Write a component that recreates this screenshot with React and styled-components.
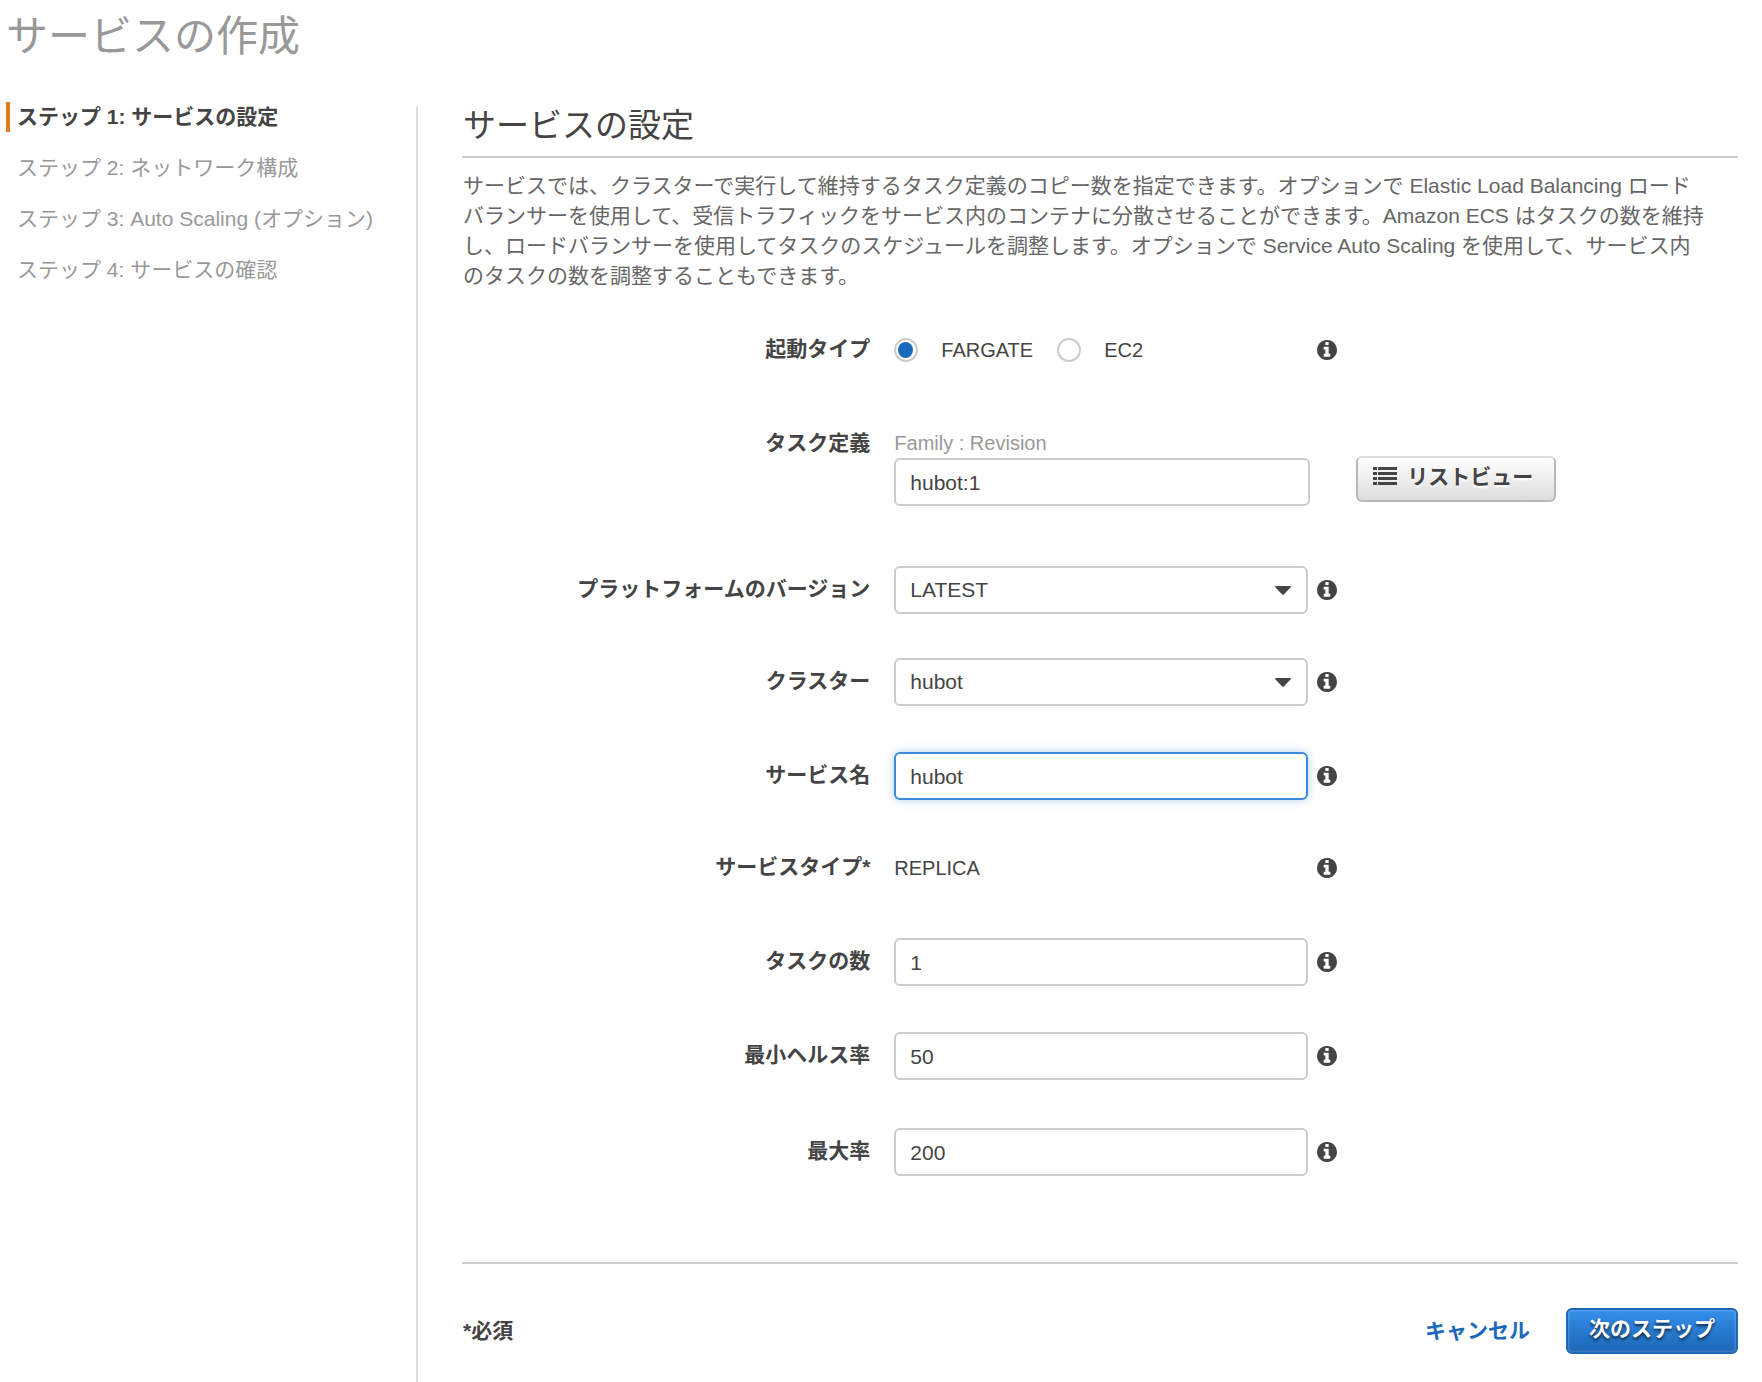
import React, { useState } from 'react';
import styled, { createGlobalStyle, css } from 'styled-components';

const GlobalStyle = createGlobalStyle`
    * {
        box-sizing: border-box;
    }

    body {
        margin: 0;
        background: #fff;
        color: #444;
        font-family: 'Liberation Sans', 'Noto Sans CJK JP', sans-serif;
        font-size: 21px;
        line-height: 30px;
    }

    button, input, select {
        font: inherit;
        color: inherit;
    }
`;

const Page = styled.div`
    display: flex;
    flex-direction: column;
    min-height: 100vh;
`;

const PageTitle = styled.h1`
    margin: 0;
    padding: 7px 6px 33px;
    color: #999;
    font-size: 42px;
    font-weight: 400;
    line-height: 60px;
`;

const Layout = styled.div`
    flex: 1;
    display: flex;
    padding: 0 24px 0 6px;
`;

const Sidebar = styled.nav`
    flex: 0 0 410px;
`;

const StepList = styled.ol`
    display: flex;
    flex-direction: column;
    gap: 21px;
    margin: 0;
    padding: 2px 0 0;
    list-style: none;
`;

const Step = styled.li`
    padding-left: 7px;
    border-left: 4px solid transparent;
    color: #999;

    ${({ $active }) =>
        $active &&
        css`
            border-color: #e07b23;
            color: #444;
            font-weight: 700;
        `}
`;

const Main = styled.main`
    flex: 1;
    min-width: 0;
    margin-top: 6px;
    padding-left: 44px;
    border-left: 2px solid #ddd;
`;

const SectionTitle = styled.h2`
    margin: 0;
    padding: 0 1px 10px;
    border-bottom: 2px solid #ccc;
    font-size: 33px;
    font-weight: 400;
    line-height: 40px;
`;

const Description = styled.p`
    margin: 13px 0 35px;
    padding: 0 30px 0 1px;
    color: #666;
`;

const Row = styled.div`
    display: grid;
    grid-template-columns: 32% 1fr;
    column-gap: 24px;
    align-items: ${({ $top }) => ($top ? 'start' : 'center')};
    margin-bottom: ${({ $gap }) => $gap || 44}px;
`;

const Label = styled.label`
    padding-bottom: 2px;
    font-weight: 700;
    text-align: right;
    line-height: 22px;
`;

const Controls = styled.div`
    display: flex;
    align-items: center;
    gap: 9px;
    min-height: 48px;
`;

const Field = styled.div`
    position: relative;
    display: flex;
    align-items: center;
    flex: 0 1 414px;
    font-size: 20px;
`;

const controlStyle = css`
    width: 100%;
    height: 48px;
    padding: 0 14px;
    border: 2px solid #ccc;
    border-radius: 6px;
    background: #fff;
    font-size: 21px;
    outline: none;
`;

const TextInput = styled.input`
    ${controlStyle}
    padding-top: 2px;

    ${({ $focused }) =>
        $focused &&
        css`
            border-color: #3b8ade;
            box-shadow: 0 0 10px #3b8ade66;
        `}
`;

const Select = styled.select`
    ${controlStyle}
    appearance: none;
`;

const Caret = styled.svg`
    position: absolute;
    right: 17px;
    width: 16px;
    height: 9px;
    fill: #444;
    pointer-events: none;
`;

const RadioLabel = styled.label`
    display: flex;
    align-items: center;
    gap: 23px;
    margin-right: 24px;
`;

const Radio = styled.input`
    appearance: none;
    width: 24px;
    height: 24px;
    margin: 0;
    border: 2px solid #ccc;
    border-radius: 50%;

    &:checked::before {
        content: '';
        display: block;
        width: 15px;
        height: 16px;
        margin: 2px;
        border-radius: 50%;
        background: #1a69bb;
    }
`;

const InfoButton = styled.button`
    display: flex;
    padding: 0;
    border: 0;
    background: none;
`;

const InfoIcon = styled.svg`
    width: 20px;
    height: 20px;
    fill: #444;
`;

const TaskControls = styled.div`
    display: flex;
    align-items: flex-end;
    gap: 46px;
`;

const TaskField = styled.div`
    flex: 0 1 416px;
`;

const Hint = styled.div`
    padding-bottom: 4px;
    color: #999;
    font-size: 20px;
    line-height: 22px;
`;

const Button = styled.button`
    display: flex;
    align-items: center;
    justify-content: center;
    height: 46px;
    border-radius: 6px;
    font-weight: 700;
    white-space: nowrap;
`;

const ListButton = styled(Button)`
    gap: 10px;
    width: 200px;
    margin-bottom: 4px;
    padding: 0 6px 4px 0;
    border: 2px solid #b8b8b8;
    border-top-color: #ddd;
    background: linear-gradient(#fff, #dcdcdc);
    text-shadow: 0 2px 2px #fff;
`;

const ListIcon = styled.svg`
    width: 24px;
    height: 18px;
    margin-bottom: 2px;
    fill: #444;
`;

const Footer = styled.footer`
    display: flex;
    align-items: center;
    gap: 36px;
    margin-top: 86px;
    padding: 44px 0 28px;
    border-top: 2px solid #ccc;
    font-weight: 700;
`;

const Required = styled.span`
    margin-right: auto;
    padding-left: 1px;
`;

const CancelLink = styled.a`
    color: #1a69bb;
    text-decoration: none;
`;

const NextButton = styled(Button)`
    width: 172px;
    padding: 0 0 4px;
    border: 2px solid #1c68b9;
    background: linear-gradient(#368fea, #1a66b6);
    box-shadow: inset 0 0 3px #ffffff66;
    color: #fff;
    text-shadow: 0 2px 3px #000000b3;
`;

const steps = [
    'ステップ 1: サービスの設定',
    'ステップ 2: ネットワーク構成',
    'ステップ 3: Auto Scaling (オプション)',
    'ステップ 4: サービスの確認',
];

const Info = () => (
    <InfoButton type='button' aria-label='情報'>
        <InfoIcon viewBox='128 128 1536 1536' aria-hidden='true'>
            <path d='M1152 1376v-160q0-14-9-23t-23-9h-96v-512q0-14-9-23t-23-9h-320q-14 0-23 9t-9 23v160q0 14 9 23t23 9h96v320h-96q-14 0-23 9t-9 23v160q0 14 9 23t23 9h448q14 0 23-9t9-23zm-128-896v-160q0-14-9-23t-23-9h-192q-14 0-23 9t-9 23v160q0 14 9 23t23 9h192q14 0 23-9t9-23zm640 416q0 209-103 385.5t-279.5 279.5-385.5 103-385.5-103-279.5-279.5-103-385.5 103-385.5 279.5-279.5 385.5-103 385.5 103 279.5 279.5 103 385.5z' />
        </InfoIcon>
    </InfoButton>
);

const TextRow = ({ id, label, value, gap, focused }) => (
    <Row $gap={gap}>
        <Label htmlFor={id}>{label}</Label>
        <Controls>
            <Field>
                <TextInput id={id} type='text' defaultValue={value} $focused={focused} />
            </Field>
            <Info />
        </Controls>
    </Row>
);

const SelectRow = ({ id, label, value, gap }) => (
    <Row $gap={gap}>
        <Label htmlFor={id}>{label}</Label>
        <Controls>
            <Field>
                <Select id={id} defaultValue={value}>
                    <option value={value}>{value}</option>
                </Select>
                <Caret viewBox='0 0 16 9' aria-hidden='true'>
                    <path d='M.8 0h14.4c.8 0 1 .8.5 1.3L8.8 8.5a1.1 1.1 0 0 1-1.6 0L.3 1.3C-.2.8 0 0 .8 0z' />
                </Caret>
            </Field>
            <Info />
        </Controls>
    </Row>
);

const App = () => {
    const [launchType, setLaunchType] = useState('FARGATE');

    return (
        <>
            <GlobalStyle />
            <Page>
                <PageTitle>サービスの作成</PageTitle>
                <Layout>
                    <Sidebar>
                        <StepList>
                            {steps.map((step, i) => (
                                <Step key={step} $active={i === 0}>
                                    {step}
                                </Step>
                            ))}
                        </StepList>
                    </Sidebar>
                    <Main>
                        <SectionTitle>サービスの設定</SectionTitle>
                        <Description>
                            サービスでは、クラスターで実行して維持するタスク定義のコピー数を指定できます。オプションで Elastic Load Balancing ロードバランサーを使用して、受信トラフィックをサービス内のコンテナに分散させることができます。Amazon ECS はタスクの数を維持し、ロードバランサーを使用してタスクのスケジュールを調整します。オプションで Service Auto Scaling を使用して、サービス内のタスクの数を調整することもできます。
                        </Description>

                        <Row $gap={58}>
                            <Label as='span' id='launch-type'>
                                起動タイプ
                            </Label>
                            <Controls>
                                <Field role='radiogroup' aria-labelledby='launch-type'>
                                    {['FARGATE', 'EC2'].map((type) => (
                                        <RadioLabel key={type}>
                                            <Radio
                                                type='radio'
                                                name='launchType'
                                                checked={launchType === type}
                                                onChange={() => setLaunchType(type)}
                                            />
                                            {type}
                                        </RadioLabel>
                                    ))}
                                </Field>
                                <Info />
                            </Controls>
                        </Row>

                        <Row $top $gap={60}>
                            <Label htmlFor='task-definition'>タスク定義</Label>
                            <TaskControls>
                                <TaskField>
                                    <Hint>Family : Revision</Hint>
                                    <TextInput id='task-definition' type='text' defaultValue='hubot:1' />
                                </TaskField>
                                <ListButton type='button'>
                                    <ListIcon viewBox='0 0 24 18' aria-hidden='true'>
                                        <path d='M0 0h4v3H0zM5 0h19v3H5zM0 5h4v3H0zM5 5h19v3H5zM0 10h4v3H0zM5 10h19v3H5zM0 15h4v3H0zM5 15h19v3H5z' />
                                    </ListIcon>
                                    リストビュー
                                </ListButton>
                            </TaskControls>
                        </Row>

                        <SelectRow id='platform-version' label='プラットフォームのバージョン' value='LATEST' />
                        <SelectRow id='cluster' label='クラスター' value='hubot' gap={46} />
                        <TextRow id='service-name' label='サービス名' value='hubot' focused />
                        <Row $gap={46}>
                            <Label as='span'>サービスタイプ*</Label>
                            <Controls>
                                <Field>REPLICA</Field>
                                <Info />
                            </Controls>
                        </Row>
                        <TextRow id='task-count' label='タスクの数' value='1' gap={46} />
                        <TextRow id='min-healthy' label='最小ヘルス率' value='50' gap={48} />
                        <TextRow id='max-percent' label='最大率' value='200' />

                        <Footer>
                            <Required>*必須</Required>
                            <CancelLink href='#'>キャンセル</CancelLink>
                            <NextButton type='button'>次のステップ</NextButton>
                        </Footer>
                    </Main>
                </Layout>
            </Page>
        </>
    );
};

export default App;
